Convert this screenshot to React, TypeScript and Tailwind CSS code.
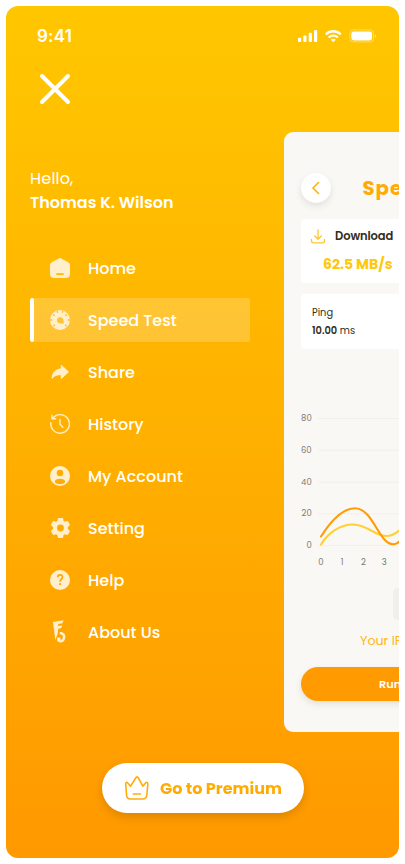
import React from "react";

const Svg = ({ size = 20, children }: { size?: number; children: React.ReactNode }) => (
  <svg width={size} height={size} viewBox={`0 0 ${size} ${size}`} fill="none" className="block shrink-0">
    {children}
  </svg>
);

const CREAM = "#FFEFCC";

const HomeIcon = () => (
  <Svg>
    <path fillRule="evenodd" fill={CREAM} d="M8.8.4a2.4 2.4 0 0 1 2.4 0l7 3.9A3.4 3.4 0 0 1 20 7.2V16a4 4 0 0 1-4 4H4a4 4 0 0 1-4-4V7.2c0-1.2.7-2.3 1.8-2.9zM7 15.2a.9.9 0 0 0 0 1.8h6a.9.9 0 0 0 0-1.8z" />
  </Svg>
);

const GaugeIcon = () => (
  <Svg>
    <path fillRule="evenodd" fill={CREAM} d="M10 0a10 10 0 1 0 0 20 10 10 0 0 0 0-20zM7.400 8.500c.9-1.200 2.500-1.600 3.900-1.100 1.600.6 2.300 1.900 2.300 3.400l.1 2.700-3.600-.1a3.200 3.200 0 0 1-2.700-4.900z" />
    <path stroke="#FFC02F" strokeWidth="1.300" d="M0 10h2.300M20 10h-2.300M3 4.500l1.700 1.300M17 4.500l-1.700 1.300M3.300 16.200 5 14.800M16.700 16.200 15 14.800M7 .6l.7 2.100M13 .6l-.7 2.100" />
  </Svg>
);

const ShareIcon = () => (
  <Svg>
    <path fill={CREAM} stroke={CREAM} strokeWidth="1" strokeLinejoin="round" d="M11.300 3.200 18.500 9.900l-7.200 6.700v-3.900C7 12.500 4.500 13.400 2.100 16.200 2.300 11 5.300 7.400 11.300 6.800z" />
  </Svg>
);

const HistoryIcon = () => (
  <Svg>
    <path d="M.9 8.600A9.300 9.300 0 1 0 5 2.200L2.300 4.400M2 1.300v3.500h3.700M10 5.400v4.800l2.800 3" stroke={CREAM} strokeWidth="1.400" strokeLinecap="round" strokeLinejoin="round" />
  </Svg>
);

const AccountIcon = () => (
  <Svg>
    <path fillRule="evenodd" fill={CREAM} d="M10 0a10 10 0 1 0 0 20 10 10 0 0 0 0-20zm0 3.700a3.300 3.300 0 1 1 0 6.600 3.300 3.300 0 0 1 0-6.600zM4.800 15.500c0-1.700 2.400-2.800 5.200-2.800s5.200 1.100 5.200 2.800c0 1.600-2.400 2.700-5.200 2.700s-5.200-1.100-5.200-2.700z" />
  </Svg>
);

const SettingIcon = () => (
  <Svg>
    <path
      fillRule="evenodd"
      fill={CREAM}
      d="M8.700 0h3.600c.5 0 .8.3.9.8l.3 2.100 1.500.9 2-.7c.5-.2.9 0 1.100.4l1.600 2.800c.2.400.1.900-.2 1.200l-1.600 1.400v2.200l1.600 1.400c.3.300.4.800.2 1.200l-1.600 2.800c-.2.400-.6.600-1.100.4l-2-.7-1.500.9-.3 2.100c-.1.500-.4.800-.9.800H8.700c-.5 0-.8-.3-.9-.8l-.4-2.100-1.500-.9-2 .7c-.4.200-.9 0-1.100-.4l-1.600-2.800c-.2-.4-.1-.9.200-1.200L3 11.100V8.900L1.400 7.500c-.3-.3-.4-.8-.2-1.200l1.600-2.800c.2-.4.7-.6 1.100-.4l2 .7 1.500-.9.400-2.100c.1-.5.4-.8.9-.8zm1.800 6.600a3.400 3.400 0 1 0 0 6.800 3.400 3.400 0 0 0 0-6.800z"
    />
  </Svg>
);

const HelpIcon = () => (
  <Svg>
    <circle cx="10" cy="10" r="10" fill={CREAM} />
    <path d="M7.700 7.200c.1-1.600 1-2.400 2.400-2.400s2.400.9 2.400 2.300c0 2.200-2.400 2-2.400 4.600" stroke="#FFA800" strokeWidth="1.700" />
    <path d="M9.100 13.300H11v1.800H9.100z" fill="#FFA800" />
  </Svg>
);

const AboutIcon = () => (
  <svg width="20" height="24" viewBox="0 0 20 24" fill="none" className="block shrink-0">
    <path fill={CREAM} d="M3 2 13.600.3l-1.100 3-4.200.8-.4 1.800 4.400-.4-1.300 2.700-2.800.5L7.600 14l-2.300 6z" />
    <path d="M9.800 13.300h1.900c2 .9 2.800 2.500 2.400 4.400-.5 2.200-2 3.600-4.100 3.500-1.100-.1-1.800-.8-1.800-1.900" stroke={CREAM} strokeWidth="2.500" />
    <path d="M7.100 17.600h3.400v3H7.100z" fill={CREAM} />
  </svg>
);

const items = [
  { label: "Home", Icon: HomeIcon },
  { label: "Speed Test", Icon: GaugeIcon, active: true },
  { label: "Share", Icon: ShareIcon },
  { label: "History", Icon: HistoryIcon },
  { label: "My Account", Icon: AccountIcon },
  { label: "Setting", Icon: SettingIcon },
  { label: "Help", Icon: HelpIcon },
  { label: "About Us", Icon: AboutIcon },
];

function StatusBar() {
  return (
    <div className="flex h-[59px] items-center justify-between pl-[31px] pr-[21px]">
      <span className="pt-px font-['Inter',sans-serif] text-[17px] font-semibold leading-none tracking-[0.2px] [font-feature-settings:normal]">9:41</span>
      <svg width="80" height="14" viewBox="0 0 80 14" fill="none" className="mt-px block">
        <g fill="white">
          <rect x="0" y="8.700" width="3.200" height="4.300" rx="1" />
          <rect x="5.300" y="6.400" width="3.200" height="6.600" rx="1" />
          <rect x="10.700" y="3.800" width="3.200" height="9.200" rx="1" />
          <rect x="16" y="1" width="3.200" height="12" rx="1" />
        </g>
        <path d="M27.800 5.300c4.300-4.100 10.700-4.100 15 0M30.700 8.500c2.700-2.500 6.500-2.500 9.200 0" stroke="white" strokeWidth="2.300" />
        <path d="M32.800 10.700c1.500-1.300 3.500-1.300 5 0l-2.500 2.500z" fill="white" />
        <rect x="51.800" y=".9" width="23.800" height="12" rx="3.500" stroke="white" strokeOpacity=".38" />
        <rect x="53.300" y="2.400" width="20.800" height="9" rx="2.400" fill="white" />
        <path d="M77 5v4c.8-.3 1.200-1.100 1.200-2S77.800 5.300 77 5z" fill="white" fillOpacity=".45" />
      </svg>
    </div>
  );
}

function Chart() {
  const rows = [
    { v: "80", y: 8.5 },
    { v: "60", y: 40.2 },
    { v: "40", y: 72.2 },
    { v: "20", y: 103.8 },
    { v: "0", y: 135.5 },
  ];
  const cols = [
    { v: "0", x: 37 },
    { v: "1", x: 58 },
    { v: "2", x: 79.5 },
    { v: "3", x: 100.3 },
  ];
  return (
    <svg width="115" height="160" viewBox="0 0 115 160" fill="none" className="mt-[61px] block">
      {rows.map((r) => (
        <g key={r.v}>
          <path d={`M34 ${r.y}H115`} stroke="#F1F0ED" />
          <text x="27.700" y={r.y + 2.3} textAnchor="end" fontSize="8.450" fill="#7B7974">{r.v}</text>
        </g>
      ))}
      {cols.map((c) => (
        <text key={c.v} x={c.x} y="154.500" textAnchor="middle" fontSize="8.450" fill="#7B7974">{c.v}</text>
      ))}
      <path d="M37 134.500C44 123 56 114.500 69 114.500C83 114.500 91 126 102 126C107 126 111 124 115 120.500" stroke="#FFD035" strokeWidth="2.100" strokeLinecap="round" />
      <path d="M37 126.500C45 114 58 98.300 71 98.300C89 98.300 95 134.300 109 134.300C112 134.300 114 133 116 131" stroke="#FF9B05" strokeWidth="2.100" strokeLinecap="round" />
    </svg>
  );
}

function Preview() {
  return (
    <section className="h-[600px] w-[115px] shrink-0 overflow-hidden rounded-l-[9px] bg-[#F9F8F5] text-[#332D19]">
      <div className="flex w-[275px] flex-col">
        <div className="flex items-center pl-[17px] pt-[39.500px]">
          <span className="flex size-[30px] items-center justify-center rounded-full bg-white shadow-[0_3px_7px_rgba(0,0,0,0.1)]">
            <svg width="10" height="14" viewBox="0 0 10 14" fill="none">
              <path d="M7.500 1.500 2 7l5.500 5.500" stroke="#FFB000" strokeWidth="1.500" strokeLinecap="round" />
            </svg>
          </span>
          <span className="ml-[31.500px] pt-px text-[19.700px] font-bold leading-[31px] tracking-[1px] text-[#FFAB05]">Speed Test</span>
        </div>
        <div className="ml-[17px] mt-[15.500px] h-[64px] w-[110px] rounded-[4px] bg-white pt-[9px]">
          <div className="flex h-[18px] items-center">
            <svg width="16" height="16" viewBox="0 0 16 16" fill="none" className="ml-[9px]">
              <path d="M8 1v9M4.700 7 8 10.200 11.300 7M1.500 10.500v1.300c0 1.400.8 2 2 2h9c1.200 0 2-.6 2-2v-1.300" stroke="#FFC928" strokeWidth="1.300" strokeLinecap="round" strokeLinejoin="round" />
            </svg>
            <span className="ml-[9px] text-[11.500px] font-semibold tracking-[-0.1px]">Download</span>
          </div>
          <p className="ml-[22px] mt-[8px] text-[14.080px] font-bold leading-[20px] text-[#FFC80A]">62.5 MB/s</p>
        </div>
        <div className="ml-[17px] mt-[11px] h-[55px] w-[110px] rounded-[4px] bg-white pl-[11px] pt-[10px] text-[9.860px] leading-[17.500px]">
          <p>Ping</p>
          <p><b className="font-semibold">10.00</b> ms</p>
        </div>
        <Chart />
        <div className="ml-[109px] mt-[18px] h-[32px] w-[60px] rounded-[5px] bg-[#F1EFEC]" />
        <p className="ml-[76px] mt-[11px] text-[12.670px] leading-[20px] text-[#FFB520]">Your IP</p>
        <div className="ml-[17px] mt-[15.500px] flex h-[34px] w-[241px] items-center rounded-full bg-[#FF9A00] pl-[78px] pt-px text-[11.270px] font-semibold text-white shadow-[0_3px_7px_rgba(0,0,0,0.1)]">Run Test</div>
      </div>
    </section>
  );
}

export default function App() {
  return (
    <main className="h-[864px] w-[405px] bg-white p-[6px] font-['Poppins','Inter',sans-serif] [font-feature-settings:'cv11']">
      <div className="flex h-[852px] w-[393px] flex-col overflow-hidden rounded-[12px] bg-linear-to-b from-[#FFC700] to-[#FF9900] text-white">
        <StatusBar />
        <svg width="32" height="32" viewBox="0 0 32 32" fill="none" className="ml-[33px] mt-[8px] block">
          <path d="M3 3l26 26M29 3L3 29" stroke="white" strokeWidth="4" strokeLinecap="round" />
        </svg>
        <div className="mt-[27px] flex justify-between">
          <nav className="w-[244px] pl-[24px] pt-[35px]">
            <p className="text-[16px] leading-[24px] tracking-[0.2px]">Hello,</p>
            <p className="whitespace-nowrap text-[16px] font-semibold leading-[24px]">Thomas K. Wilson</p>
            <ul className="mt-[31px] flex flex-col gap-2">
              {items.map(({ label, Icon, active }) => (
                <li
                  key={label}
                  className={
                    active
                      ? "flex h-[44px] items-center overflow-hidden rounded-[2px] bg-white/20"
                      : "flex h-[44px] items-center"
                  }
                >
                  <span className={active ? "mr-4 h-full w-1 rounded-[2px] bg-white" : "mr-4 w-1"} />
                  <Icon />
                  <span className="ml-[18px] pt-[2px] text-[16px] font-medium leading-[24px]">{label}</span>
                </li>
              ))}
            </ul>
          </nav>
          <Preview />
        </div>
        <button className="ml-[96px] mt-[31px] flex h-[50px] w-[202px] items-center rounded-full bg-white pl-[22px] shadow-[0_4px_10px_rgba(0,0,0,0.14)]">
          <svg width="26" height="26" viewBox="0 0 26 26" fill="none">
            <path d="M2.600 20.500 1.700 9.200C1.500 7.200 2.900 6.900 3.800 8L6.600 11.200 11.700 3C12.500 1.500 13.700 1.500 14.400 3L18.800 11.200 21.600 8C22.600 6.900 24 7.400 23.800 9.300L22.800 20.300C22.500 23 21.200 24 18.900 24H6.500C4 24 2.900 23.200 2.600 20.500ZM9.300 19H16.500" stroke="#FFAD0A" strokeWidth="1.600" strokeLinecap="round" strokeLinejoin="round" />
          </svg>
          <span className="ml-[10px] whitespace-nowrap bg-linear-to-b from-[#FFB700] to-[#FFA000] bg-clip-text pt-[2px] text-[16px] font-bold leading-[24px] text-transparent">Go to Premium</span>
        </button>
      </div>
    </main>
  );
}
